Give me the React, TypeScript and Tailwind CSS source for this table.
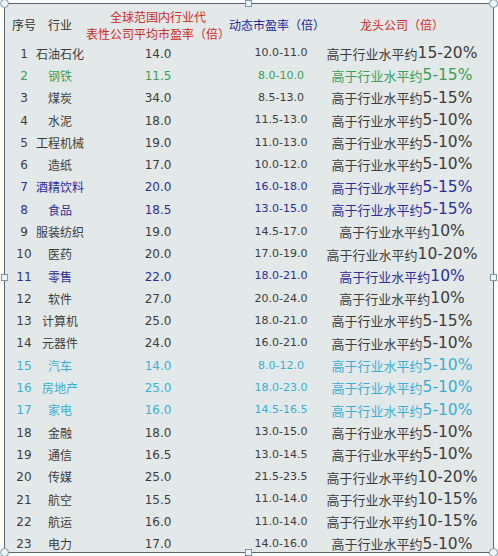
import React from "react";

type Tone = "gray" | "green" | "blue" | "cyan";

type Row = {
  no: number;
  name: string;
  pe: string;
  range: string;
  premium: string;
  tone: Tone;
};

const rows: Row[] = [
  { no: 1, name: "石油石化", pe: "14.0", range: "10.0-11.0", premium: "15-20%", tone: "gray" },
  { no: 2, name: "钢铁", pe: "11.5", range: "8.0-10.0", premium: "5-15%", tone: "green" },
  { no: 3, name: "煤炭", pe: "34.0", range: "8.5-13.0", premium: "5-15%", tone: "gray" },
  { no: 4, name: "水泥", pe: "18.0", range: "11.5-13.0", premium: "5-10%", tone: "gray" },
  { no: 5, name: "工程机械", pe: "19.0", range: "11.0-13.0", premium: "5-10%", tone: "gray" },
  { no: 6, name: "造纸", pe: "17.0", range: "10.0-12.0", premium: "5-10%", tone: "gray" },
  { no: 7, name: "酒精饮料", pe: "20.0", range: "16.0-18.0", premium: "5-15%", tone: "blue" },
  { no: 8, name: "食品", pe: "18.5", range: "13.0-15.0", premium: "5-15%", tone: "blue" },
  { no: 9, name: "服装纺织", pe: "19.0", range: "14.5-17.0", premium: "10%", tone: "gray" },
  { no: 10, name: "医药", pe: "20.0", range: "17.0-19.0", premium: "10-20%", tone: "gray" },
  { no: 11, name: "零售", pe: "22.0", range: "18.0-21.0", premium: "10%", tone: "blue" },
  { no: 12, name: "软件", pe: "27.0", range: "20.0-24.0", premium: "10%", tone: "gray" },
  { no: 13, name: "计算机", pe: "25.0", range: "18.0-21.0", premium: "5-15%", tone: "gray" },
  { no: 14, name: "元器件", pe: "24.0", range: "16.0-21.0", premium: "5-10%", tone: "gray" },
  { no: 15, name: "汽车", pe: "14.0", range: "8.0-12.0", premium: "5-10%", tone: "cyan" },
  { no: 16, name: "房地产", pe: "25.0", range: "18.0-23.0", premium: "5-10%", tone: "cyan" },
  { no: 17, name: "家电", pe: "16.0", range: "14.5-16.5", premium: "5-10%", tone: "cyan" },
  { no: 18, name: "金融", pe: "18.0", range: "13.0-15.0", premium: "5-10%", tone: "gray" },
  { no: 19, name: "通信", pe: "16.5", range: "13.0-14.5", premium: "5-10%", tone: "gray" },
  { no: 20, name: "传媒", pe: "25.0", range: "21.5-23.5", premium: "10-20%", tone: "gray" },
  { no: 21, name: "航空", pe: "15.5", range: "11.0-14.0", premium: "10-15%", tone: "gray" },
  { no: 22, name: "航运", pe: "16.0", range: "11.0-14.0", premium: "10-15%", tone: "gray" },
  { no: 23, name: "电力", pe: "17.0", range: "14.0-16.0", premium: "5-10%", tone: "gray" },
];

const toneClass: Record<Tone, string> = {
  gray: "text-[#3c3c3c]",
  green: "text-[#3a9e55]",
  blue: "text-[#2c2ca0]",
  cyan: "text-[#3aaed6]",
};

const cjk = "font-['Noto_Sans_CJK_SC',sans-serif]";
const latin = "font-['DejaVu_Sans','Noto_Sans_CJK_SC',sans-serif]";

function Cell({ className = "", children }: { className?: string; children: React.ReactNode }) {
  return (
    <div className={`flex items-center justify-center whitespace-nowrap ${className}`}>
      {children}
    </div>
  );
}

function CornerHandle({ className }: { className: string }) {
  return (
    <div
      className={`absolute h-[9px] w-[9px] rounded-full border border-[#7c96aa] bg-[#eef5f9] ${className}`}
    />
  );
}

function SideHandle({ className }: { className: string }) {
  return (
    <div
      className={`absolute h-[7px] w-[7px] border border-[#7c96aa] bg-[#eef5f9] ${className}`}
    />
  );
}

export default function App() {
  return (
    <div className="h-[556px] w-[498px] overflow-hidden bg-white">
      <div className="relative ml-[4px] mt-[3px] h-[550px] w-[490px] border border-[#5c6670] bg-[#e3e9e9]">
        <div className="grid h-[38px] grid-cols-[38px_34px_162px_84px_158px]">
          <Cell className={`pt-[3px] text-[12px] text-[#333] ${cjk}`}>序号</Cell>
          <Cell className={`pt-[3px] text-[12px] text-[#333] ${cjk}`}>行业</Cell>
          <div className={`flex flex-col items-center pt-[4px] text-[12px] leading-[17px] text-[#d02828] ${cjk}`}>
            <span className="whitespace-nowrap">全球范国内行业代</span>
            <span className="whitespace-nowrap">表性公司平均市盈率（倍）</span>
          </div>
          <Cell className={`pr-[8px] pt-[3px] text-[12px] text-[#24249a] ${cjk}`}>动态市盈率（倍）</Cell>
          <Cell className={`pt-[3px] text-[12px] text-[#d02828] ${cjk}`}>龙头公司（倍）</Cell>
        </div>

        {rows.map((row) => (
          <div
            key={row.no}
            className={`grid h-[22.3px] grid-cols-[38px_34px_162px_84px_158px] ${toneClass[row.tone]}`}
          >
            <Cell className={`text-[12px] ${latin}`}>{row.no}</Cell>
            <Cell className={`text-[12px] ${cjk}`}>{row.name}</Cell>
            <Cell className={`text-[12px] ${latin}`}>{row.pe}</Cell>
            <Cell className={`text-[11px] ${latin}`}>{row.range}</Cell>
            <Cell className="items-baseline">
              <span className={`text-[13px] ${cjk}`}>高于行业水平约</span>
              <span className={`text-[15.5px] ${latin}`}>{row.premium}</span>
            </Cell>
          </div>
        ))}

        <CornerHandle className="-left-[5px] -top-[5px]" />
        <CornerHandle className="-right-[5px] -top-[5px]" />
        <CornerHandle className="-bottom-[5px] -left-[5px]" />
        <CornerHandle className="-bottom-[5px] -right-[5px]" />
        <SideHandle className="-top-[4px] left-[240px]" />
        <SideHandle className="-bottom-[4px] left-[240px]" />
        <SideHandle className="-left-[4px] top-[270px]" />
        <SideHandle className="-right-[4px] top-[270px]" />
      </div>
    </div>
  );
}
